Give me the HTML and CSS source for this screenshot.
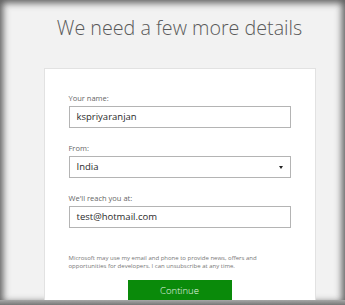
FILE: index.html
```html
<!DOCTYPE html>
<html lang="en">
<head>
    <meta charset="UTF-8">
    <title>We need a few more details</title>
    <link rel="stylesheet" href="styles.css">
</head>
<body>
    <div class="frame">
        <h1 class="title">We need a few more details</h1>
        <div class="card">
            <label class="label">Your name:</label>
            <div class="field">kspriyaranjan</div>
            <label class="label">From:</label>
            <div class="field select">India<span class="arrow"></span></div>
            <label class="label">We'll reach you at:</label>
            <div class="field">test@hotmail.com</div>
            <p class="note">Microsoft may use my email and phone to provide news, offers and<br>opportunities for developers. I can unsubscribe at any time.</p>
            <div class="actions"><button class="btn">Continue</button></div>
        </div>
        <div class="bottombar"></div>
    </div>
</body>
</html>
```

FILE: styles.css
```css
body{
    margin: 0;
    font-family: "Open Sans", "Noto Sans", sans-serif;
}
.frame{
    position: relative;
    box-sizing: border-box;
    width: 345px;
    height: 305px;
    padding-left: 14px;
    background-color: #f2f2f2;
    overflow: hidden;
    display: flex;
    flex-direction: column;
    align-items: center;
    box-shadow: inset 0 0 7px 3px rgba(55, 55, 55, 0.8);
}
.title{
    margin: 14px 0 0 0;
    font-size: 19.7px;
    font-weight: 300;
    color: #5a5a5a;
    line-height: 28px;
    letter-spacing: 0;
}
.card{
    width: 222px;
    height: 300px;
    margin-top: 26px;
    background-color: #fff;
    border: 1px solid #e2e2e2;
    padding: 24px 24px 0 24px;
    display: flex;
    flex-direction: column;
}
.label{
    font-size: 7.5px;
    color: #666;
    line-height: 10px;
    margin-bottom: 3px;
}
.field{
    height: 20px;
    border: 1px solid #b4b4b4;
    font-size: 9.5px;
    color: #2a2a2a;
    line-height: 20px;
    padding: 0 7px;
    margin-bottom: 15px;
    display: flex;
    align-items: center;
    justify-content: space-between;
}
.arrow{
    width: 0;
    height: 0;
    border-left: 2px solid transparent;
    border-right: 2px solid transparent;
    border-top: 3px solid #222;
}
.note{
    margin: 11px 0 0 0;
    font-size: 6px;
    line-height: 8px;
    color: #777;
}
.actions{
    display: flex;
    justify-content: center;
    margin-top: 10px;
}
.btn{
    width: 104px;
    height: 21px;
    border: none;
    background-color: #0a8a0a;
    color: #e8f5e8;
    font-family: "Open Sans", "Noto Sans", sans-serif;
    font-size: 9.5px;
    font-weight: 300;
    padding: 0;
}
.bottombar{
    position: absolute;
    left: 0;
    right: 0;
    bottom: 0;
    height: 5px;
    background: linear-gradient(#a8a8a8, #777);
}
```
